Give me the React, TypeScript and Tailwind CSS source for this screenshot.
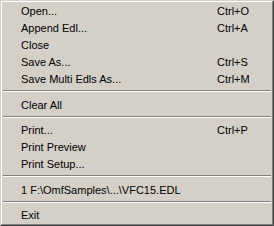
import React from 'react';

type Entry = { label?: string; shortcut?: string; sep?: boolean };

const ENTRIES: Entry[] = [
  { label: 'Open...', shortcut: 'Ctrl+O' },
  { label: 'Append Edl...', shortcut: 'Ctrl+A' },
  { label: 'Close' },
  { label: 'Save As...', shortcut: 'Ctrl+S' },
  { label: 'Save Multi Edls As...', shortcut: 'Ctrl+M' },
  { sep: true },
  { label: 'Clear All' },
  { sep: true },
  { label: 'Print...', shortcut: 'Ctrl+P' },
  { label: 'Print Preview' },
  { label: 'Print Setup...' },
  { sep: true },
  { label: '1 F:\\OmfSamples\\...\\VFC15.EDL' },
  { sep: true },
  { label: 'Exit' },
];

export default function App() {
  return (
    <div
      className="w-[274px] h-[226px] bg-[#d4d0c8] border-t border-l border-t-[#d4d0c8] border-l-[#d4d0c8] border-r border-b border-r-[#404040] border-b-[#404040] text-[11px] text-[#000]"
      style={{ fontFamily: '"Liberation Sans", Arial, sans-serif' }}
    >
      <div className="h-full border-t border-l border-t-white border-l-white border-r border-b border-r-[#808080] border-b-[#808080] px-[1px] pb-[1px] flex flex-col">
        {ENTRIES.map((e, i) =>
          e.sep ? (
            <div key={i} className="h-[9px] pt-[3px]">
              <div className="h-[1px] bg-[#808080]" />
              <div className="h-[1px] bg-white" />
            </div>
          ) : (
            <div key={i} className="h-[17px] flex items-center pl-[18px] pr-[2px] leading-[15px] pt-[2px]">
              <span className="flex-1 whitespace-nowrap">{e.label}</span>
              {e.shortcut && <span className="w-[52px] whitespace-nowrap">{e.shortcut}</span>}
            </div>
          )
        )}
      </div>
    </div>
  );
}
